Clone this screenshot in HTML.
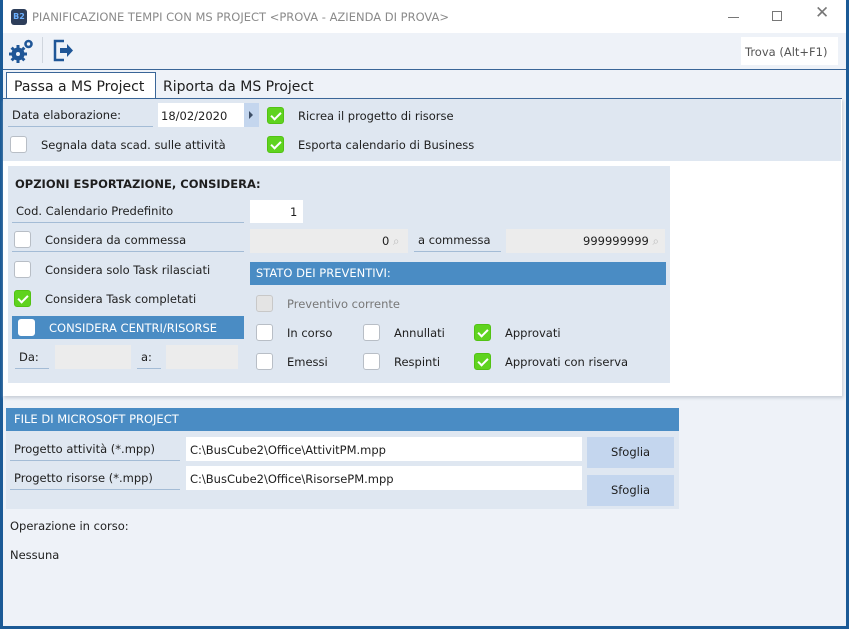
<!DOCTYPE html>
<html><head><meta charset="utf-8"><style>
*{margin:0;padding:0;box-sizing:border-box}
body{width:849px;height:629px;overflow:hidden;background:#1b5a96;font-family:"DejaVu Sans","Liberation Sans",sans-serif;font-size:11.5px;color:#1e1e1e;position:relative}
.a{position:absolute}
.t{position:absolute;white-space:nowrap;line-height:14px}
.cb{position:absolute;width:17px;height:17px;border:1px solid #b8bec6;border-radius:3px;background:#fff}
.cb.on{background:#5fd31f;border-color:#52c214}
.cb.on::after{content:"";position:absolute;left:5px;top:2px;width:4px;height:8px;border:solid #fff;border-width:0 2px 2px 0;transform:rotate(45deg)}
.lbl{position:absolute;border-bottom:1px solid #a4bcd6;white-space:nowrap;padding-left:4px;line-height:22px}
.in{position:absolute;background:#fff}
.gr{position:absolute;background:#ececec}
.hdr{position:absolute;background:#4a8cc4;color:#fff;padding-left:6px}
</style></head><body>
<div class="a" style="left:3px;top:0;width:843px;height:626px;background:#eef2f8"></div>
<div class="a" style="left:3px;top:0;width:843px;height:33px;background:#fff"></div>
<div class="a" style="left:11px;top:9px;width:16px;height:16px;background:#2d3e5a;border-radius:3px;color:#6cb0ff;font-size:8px;font-weight:bold;text-align:center;line-height:16px">B2</div>
<div class="t" style="left:32px;top:10px;color:#8a8a8a;font-size:11.5px">PIANIFICAZIONE TEMPI CON MS PROJECT &lt;PROVA - AZIENDA DI PROVA&gt;</div>
<div class="a" style="left:728px;top:17px;width:11px;height:1px;background:#777"></div>
<div class="a" style="left:772px;top:11px;width:10px;height:10px;border:1px solid #777"></div>
<div class="t" style="left:815px;top:6px;color:#777;font-size:17px">✕</div>
<svg class="a" style="left:9px;top:38px" width="26" height="26" viewBox="0 0 26 26"><g fill="#1f5697"><circle cx="9" cy="16" r="6.5"/><rect x="7.5" y="7" width="3" height="18"/><rect x="0" y="14.5" width="18" height="3"/><rect x="7.5" y="7" width="3" height="18" transform="rotate(45 9 16)"/><rect x="7.5" y="7" width="3" height="18" transform="rotate(-45 9 16)"/></g><circle cx="9" cy="16" r="2" fill="#eef2f8"/><circle cx="19.5" cy="6" r="3" fill="none" stroke="#1f5697" stroke-width="2.6"/></svg>
<div class="a" style="left:42px;top:37px;width:1px;height:26px;background:#d0d6de"></div>
<svg class="a" style="left:52px;top:38px" width="24" height="26" viewBox="0 0 24 26"><path d="M12 3H3v19h9" fill="none" stroke="#1f5697" stroke-width="2.5"/><path d="M8 10h7V6l6 6.5-6 6.5v-4H8z" fill="#1f5697"/></svg>
<div class="in" style="left:741px;top:37px;width:97px;height:28px"></div>
<div class="t" style="left:745px;top:45px;color:#555">Trova (Alt+F1)</div>
<div class="a" style="left:3px;top:69px;width:843px;height:1px;background:#3a6698"></div>
<div class="a" style="left:6px;top:72px;width:150px;height:28px;background:#fff;border:1px solid #3a6698;border-bottom:none"></div>
<div class="t" style="left:14px;top:78px;font-size:14px;line-height:18px">Passa a MS Project</div>
<div class="t" style="left:163px;top:78px;font-size:14px;line-height:18px">Riporta da MS Project</div>
<div class="a" style="left:3px;top:98px;width:839px;height:298px;background:#fff;border-top:1px solid #3a6698;box-shadow:1px 2px 3px #c8ced6"></div>
<div class="a" style="left:3px;top:99px;width:838px;height:62px;background:#dfe7f1"></div>
<div class="lbl" style="left:8px;top:104px;width:145px">Data elaborazione:</div>
<div class="in" style="left:158px;top:103px;width:86px;height:24px"></div>
<div class="t" style="left:161px;top:109px">18/02/2020</div>
<div class="a" style="left:244px;top:103px;width:15px;height:24px;background:#c4d6ee"></div>
<div class="a" style="left:249px;top:111px;border-left:4px solid #3d4e66;border-top:4px solid transparent;border-bottom:4px solid transparent"></div>
<div class="cb on" style="left:267px;top:107px"></div><div class="t" style="left:298px;top:109px">Ricrea il progetto di risorse</div>
<div class="cb" style="left:10px;top:136px"></div><div class="t" style="left:41px;top:138px">Segnala data scad. sulle attività</div>
<div class="cb on" style="left:267px;top:136px"></div><div class="t" style="left:298px;top:138px">Esporta calendario di Business</div>

<div class="a" style="left:8px;top:166px;width:662px;height:217px;background:#dfe7f1"></div>
<div class="t" style="left:15px;top:177px;font-weight:bold">OPZIONI ESPORTAZIONE, CONSIDERA:</div>
<div class="lbl" style="left:12px;top:200px;width:232px">Cod. Calendario Predefinito</div>
<div class="in" style="left:250px;top:200px;width:53px;height:23px"></div><div class="t" style="left:290px;top:205px">1</div>
<div class="cb" style="left:14px;top:231px"></div><div class="lbl" style="left:12px;top:229px;width:232px;padding-left:33px">Considera da commessa</div>
<div class="gr" style="left:250px;top:229px;width:158px;height:24px"></div><div class="t" style="left:382px;top:234px">0 <span style="color:#bbb">⌕</span></div>
<div class="lbl" style="left:414px;top:229px;width:87px">a commessa</div>
<div class="gr" style="left:506px;top:229px;width:159px;height:24px"></div><div class="t" style="left:583px;top:234px">999999999 <span style="color:#bbb">⌕</span></div>
<div class="cb" style="left:14px;top:261px"></div><div class="t" style="left:45px;top:263px">Considera solo Task rilasciati</div>
<div class="cb on" style="left:14px;top:290px"></div><div class="t" style="left:45px;top:292px">Considera Task completati</div>
<div class="hdr" style="left:12px;top:316px;width:232px;height:23px"></div>
<div class="cb" style="left:18px;top:319px;border-color:#fff"></div><div class="t" style="left:49px;top:321px;color:#fff">CONSIDERA CENTRI/RISORSE</div>
<div class="lbl" style="left:15px;top:346px;width:34px">Da:</div>
<div class="gr" style="left:55px;top:345px;width:76px;height:24px"></div>
<div class="lbl" style="left:137px;top:346px;width:24px">a:</div>
<div class="gr" style="left:166px;top:345px;width:72px;height:24px"></div>
<div class="hdr" style="left:250px;top:262px;width:416px;height:23px;line-height:23px">STATO DEI PREVENTIVI:</div>
<div class="cb" style="left:256px;top:295px;background:#e4e4e4;border-color:#c8c8c8"></div><div class="t" style="left:287px;top:297px;color:#777">Preventivo corrente</div>
<div class="cb" style="left:256px;top:324px"></div><div class="t" style="left:287px;top:326px">In corso</div>
<div class="cb" style="left:363px;top:324px"></div><div class="t" style="left:394px;top:326px">Annullati</div>
<div class="cb on" style="left:474px;top:324px"></div><div class="t" style="left:505px;top:326px">Approvati</div>
<div class="cb" style="left:256px;top:353px"></div><div class="t" style="left:287px;top:355px">Emessi</div>
<div class="cb" style="left:363px;top:353px"></div><div class="t" style="left:394px;top:355px">Respinti</div>
<div class="cb on" style="left:474px;top:353px"></div><div class="t" style="left:505px;top:355px">Approvati con riserva</div>

<div class="a" style="left:6px;top:408px;width:673px;height:101px;background:#dfe7f1"></div>
<div class="hdr" style="left:6px;top:408px;width:673px;height:23px;line-height:23px;padding-left:8px">FILE DI MICROSOFT PROJECT</div>
<div class="lbl" style="left:10px;top:438px;width:170px">Progetto attività (*.mpp)</div>
<div class="in" style="left:186px;top:437px;width:396px;height:24px"></div><div class="t" style="left:190px;top:443px">C:\BusCube2\Office\AttivitPM.mpp</div>
<div class="a" style="left:587px;top:437px;width:87px;height:31px;background:#c4d6ee;text-align:center;line-height:31px">Sfoglia</div>
<div class="lbl" style="left:10px;top:467px;width:170px">Progetto risorse (*.mpp)</div>
<div class="in" style="left:186px;top:466px;width:396px;height:24px"></div><div class="t" style="left:190px;top:472px">C:\BusCube2\Office\RisorsePM.mpp</div>
<div class="a" style="left:587px;top:475px;width:87px;height:31px;background:#c4d6ee;text-align:center;line-height:31px">Sfoglia</div>
<div class="t" style="left:10px;top:519px">Operazione in corso:</div>
<div class="t" style="left:10px;top:548px">Nessuna</div>
</body></html>
